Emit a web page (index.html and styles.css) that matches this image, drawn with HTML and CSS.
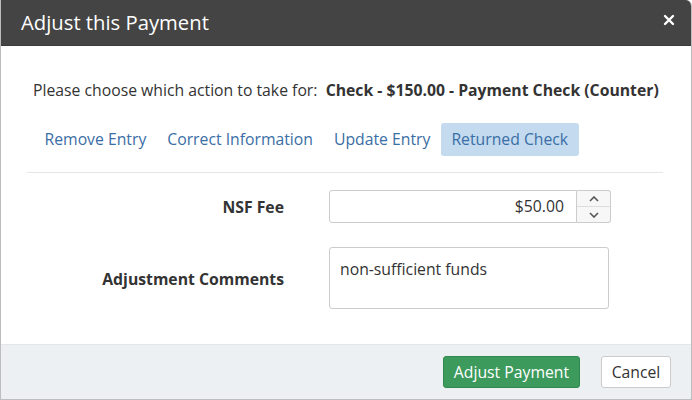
FILE: index.html
```html
<!DOCTYPE html>
<html>
<head>
<meta charset="utf-8">
<link rel="stylesheet" href="styles.css">
</head>
<body>
<div class="modal">
  <div class="modal-header">
    <h1 class="modal-title">Adjust this Payment</h1>
    <button class="close-btn" aria-label="Close">
      <svg width="12" height="12" viewBox="0 0 12 12"><path d="M2 2 L10 10 M10 2 L2 10" stroke="#fff" stroke-width="2.4" stroke-linecap="round"/></svg>
    </button>
  </div>
  <div class="modal-body">
    <p class="intro">Please choose which action to take for:&nbsp; <strong>Check - $150.00 - Payment Check (Counter)</strong></p>
    <div class="tabs">
      <a class="tab">Remove Entry</a>
      <a class="tab">Correct Information</a>
      <a class="tab">Update Entry</a>
      <a class="tab active">Returned Check</a>
    </div>
    <div class="divider"></div>
    <div class="form">
      <label class="label">NSF Fee</label>
      <div class="number-field">
        <div class="number-input">$50.00</div>
        <div class="spinner">
          <span class="spin up"><svg width="10" height="6" viewBox="0 0 10 6"><path d="M1 5 L5 1 L9 5" fill="none" stroke="#555" stroke-width="1.6"/></svg></span>
          <span class="spin down"><svg width="10" height="6" viewBox="0 0 10 6"><path d="M1 1 L5 5 L9 1" fill="none" stroke="#555" stroke-width="1.6"/></svg></span>
        </div>
      </div>
      <label class="label label-tall">Adjustment Comments</label>
      <div class="textarea">non-sufficient funds</div>
    </div>
  </div>
  <div class="modal-footer">
    <button class="btn btn-success">Adjust Payment</button>
    <button class="btn btn-default">Cancel</button>
  </div>
</div>
</body>
</html>
```
FILE: styles.css
```css
html, body {
  margin: 0;
  padding: 0;
  background: #fff;
}
body {
  font-family: "Open Sans", "Liberation Sans", sans-serif;
  font-size: 15.75px;
  color: #333;
}
.modal {
  width: 692px;
  height: 400px;
  box-sizing: border-box;
  border: 1px solid #bdbdbd;
  border-top: none;
  border-radius: 0 6px 0 0;
  display: flex;
  flex-direction: column;
  overflow: hidden;
}
.modal-header {
  height: 46px;
  background: #444;
  display: flex;
  align-items: center;
  justify-content: space-between;
  padding: 0 16px 0 20px;
  flex: none;
  border-bottom: 1px solid #3a3a3a;
  box-sizing: border-box;
}
.modal-title {
  margin: 0;
  color: #fff;
  font-weight: 400;
  font-size: 20.25px;
  line-height: 26px;
  margin-top: -1px;
}
.close-btn {
  background: none;
  border: none;
  padding: 0;
  width: 12px;
  height: 12px;
  display: flex;
  margin-top: -5px;
}
.modal-body {
  flex: 1;
  padding: 0 28px 0 26px;
}
.intro {
  margin: 34px 0 0 6px;
  line-height: 20px;
  white-space: nowrap;
}
.intro strong {
  font-weight: 700;
}
.tabs {
  display: flex;
  margin: 23px 0 0 7px;
}
.tab {
  display: block;
  padding: 0 10.5px;
  height: 33px;
  line-height: 33px;
  color: #3a6ea5;
  font-size: 15.75px;
  border-radius: 3px;
}
.tab.active {
  background: #c3daef;
}
.divider {
  height: 1px;
  background: #e6e6e6;
  margin-top: 16px;
}
.form {
  display: grid;
  grid-template-columns: 257px auto;
  column-gap: 45px;
  row-gap: 24px;
  margin-top: 17px;
  align-items: center;
  justify-content: start;
}
.label {
  text-align: right;
  font-weight: 700;
  line-height: 20px;
}
.label-tall {
  align-self: start;
  padding-top: 22px;
}
.number-field {
  display: flex;
}
.number-input {
  width: 248px;
  height: 33px;
  box-sizing: border-box;
  border: 1px solid #ccc;
  border-radius: 3px 0 0 3px;
  text-align: right;
  line-height: 31px;
  padding-right: 12px;
}
.spinner {
  width: 34px;
  height: 33px;
  box-sizing: border-box;
  border: 1px solid #ccc;
  border-left: none;
  border-radius: 0 3px 3px 0;
  display: flex;
  flex-direction: column;
  background: #f7f7f7;
}
.spin {
  flex: 1;
  display: flex;
  align-items: center;
  justify-content: center;
}
.spin.up {
  border-bottom: 1px solid #ddd;
}
.textarea {
  width: 280px;
  height: 62px;
  box-sizing: border-box;
  border: 1px solid #ccc;
  border-radius: 3px;
  padding: 11px 10px;
  line-height: 20px;
}
.modal-footer {
  height: 55px;
  flex: none;
  background: #ecf0f3;
  border-top: 1px solid #e3e6e9;
  box-sizing: border-box;
  display: flex;
  align-items: center;
  justify-content: flex-end;
  gap: 21px;
  padding: 0 20px 0 0;
}
.btn {
  font-family: "Open Sans", "Liberation Sans", sans-serif;
  font-size: 15.75px;
  height: 32px;
  border-radius: 3px;
  padding: 0 8px;
  box-sizing: border-box;
}
.btn-success {
  background: #3b9a5c;
  border: 1px solid #2f8a4f;
  color: #fff;
  width: 137px;
}
.btn-default {
  background: #fff;
  border: 1px solid #ccc;
  color: #333;
  width: 70px;
}
```
